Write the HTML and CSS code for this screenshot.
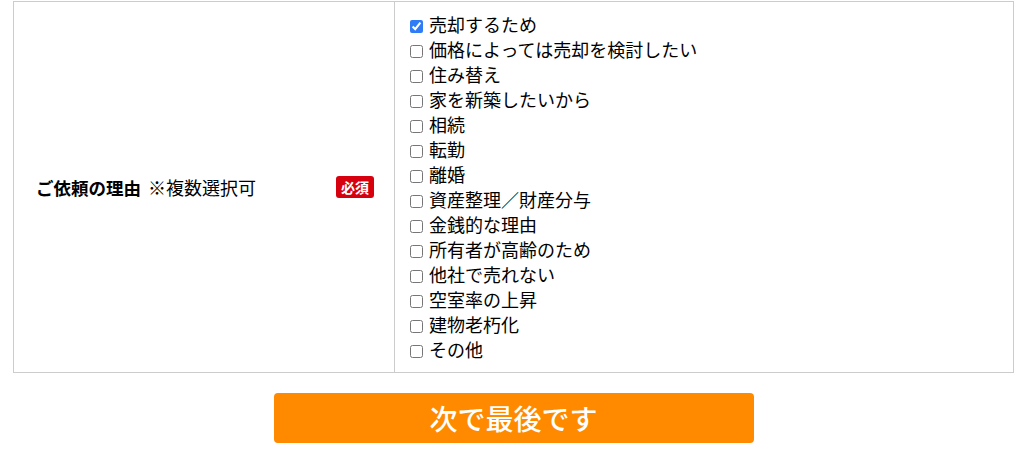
FILE: index.html
```html
<!DOCTYPE html>
<html lang="ja">
	<head>
		<meta charset="UTF-8">
		<title>ご依頼の理由</title>
		<link rel="stylesheet" href="styles.css">
	</head>
	<body>
		<div class="form-wrap">
			<table class="form-table">
				<tr>
					<th class="label-cell">
						<div class="label-inner">
							<span class="label-text"><strong>ご依頼の理由</strong><span class="note">※複数選択可</span></span>
							<span class="required">必須</span>
						</div>
					</th>
					<td class="field-cell">
						<ul class="check-list">
							<li><label><input type="checkbox" checked> 売却するため</label></li>
							<li><label><input type="checkbox"> 価格によっては売却を検討したい</label></li>
							<li><label><input type="checkbox"> 住み替え</label></li>
							<li><label><input type="checkbox"> 家を新築したいから</label></li>
							<li><label><input type="checkbox"> 相続</label></li>
							<li><label><input type="checkbox"> 転勤</label></li>
							<li><label><input type="checkbox"> 離婚</label></li>
							<li><label><input type="checkbox"> 資産整理／財産分与</label></li>
							<li><label><input type="checkbox"> 金銭的な理由</label></li>
							<li><label><input type="checkbox"> 所有者が高齢のため</label></li>
							<li><label><input type="checkbox"> 他社で売れない</label></li>
							<li><label><input type="checkbox"> 空室率の上昇</label></li>
							<li><label><input type="checkbox"> 建物老朽化</label></li>
							<li><label><input type="checkbox"> その他</label></li>
						</ul>
					</td>
				</tr>
			</table>
			<div class="actions">
				<button type="button" class="next-button">次で最後です</button>
			</div>
		</div>
	</body>
</html>
```

FILE: styles.css
```css
body {
	margin: 0;
	padding-top: 1px;
	background: #fff;
	color: #000;
	font-family: "Noto Sans CJK JP", "Noto Sans", sans-serif;
}
.form-wrap {
	width: 1001px;
	margin: 0 auto;
}
.form-table {
	width: 100%;
	border-collapse: collapse;
}
.form-table th,
.form-table td {
	border: 1px solid #ccc;
}
.label-cell {
	width: 381px;
	padding: 0 20px 0 22px;
	text-align: left;
	font-weight: normal;
	vertical-align: middle;
	box-sizing: border-box;
}
.label-inner {
	display: flex;
	align-items: center;
	justify-content: space-between;
}
.label-text {
	line-height: 24px;
}
.label-text strong {
	font-size: 17.5px;
	font-weight: bold;
}
.note {
	font-size: 18px;
	margin-left: 7px;
}
.required {
	background: #d7000f;
	color: #fff;
	font-size: 14px;
	font-weight: bold;
	line-height: 22px;
	padding: 0 5px;
	border-radius: 3px;
}
.field-cell {
	padding: 10px 14px;
}
.check-list {
	list-style: none;
	margin: 0;
	padding: 0;
}
.check-list li {
	font-size: 18px;
	line-height: 25px;
	height: 25px;
}
.check-list label {
	display: flex;
	align-items: center;
}
.check-list input {
	margin: 3px 6px 0 1px;
	width: 13px;
	height: 13px;
	accent-color: #2f7cf6;
}
.actions {
	display: flex;
	justify-content: center;
	margin-top: 20px;
}
.next-button {
	width: 480px;
	height: 50px;
	border: none;
	border-radius: 4px;
	background: #ff8a00;
	color: #fff;
	font-family: inherit;
	font-size: 28px;
	font-weight: 500;
	line-height: 50px;
	padding: 0;
}
```
